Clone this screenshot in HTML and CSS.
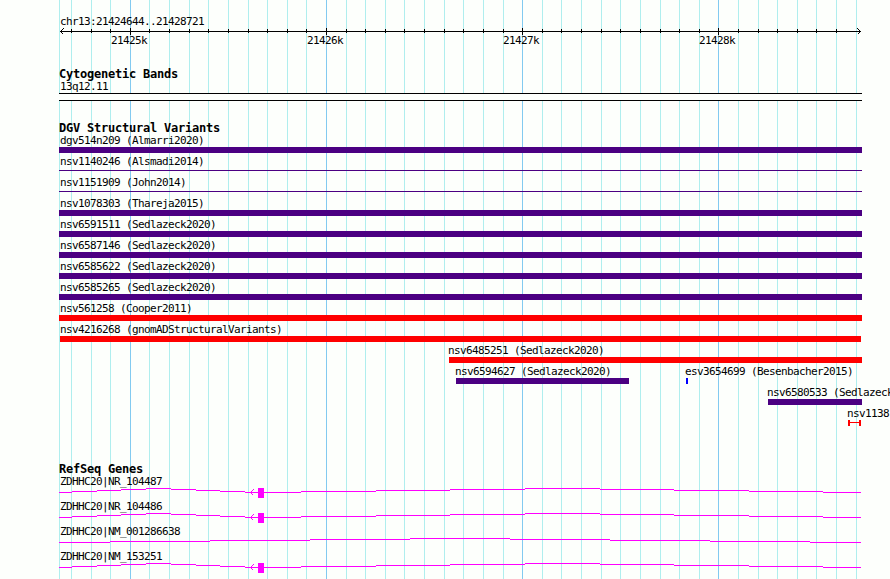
FILE: index.html
```
<!DOCTYPE html>
<html lang="en">
<head>
  <meta charset="UTF-8">
  <meta name="viewport" content="width=device-width, initial-scale=1.0">
  <title>chr13:21424644..21428721</title>
  <link rel="stylesheet" href="styles.css">
</head>
<body>
  <div class="browser">
    <svg class="grid" width="890" height="579" shape-rendering="crispEdges">
      <path class="minor" d="M59.5 0v579M71.5 0v579M91.5 0v579M110.5 0v579M149.5 0v579M169.5 0v579M189.5 0v579M208.5 0v579M228.5 0v579M248.5 0v579M267.5 0v579M287.5 0v579M306.5 0v579M346.5 0v579M365.5 0v579M385.5 0v579M404.5 0v579M424.5 0v579M444.5 0v579M463.5 0v579M483.5 0v579M503.5 0v579M542.5 0v579M561.5 0v579M581.5 0v579M601.5 0v579M620.5 0v579M640.5 0v579M660.5 0v579M679.5 0v579M699.5 0v579M738.5 0v579M758.5 0v579M777.5 0v579M797.5 0v579M816.5 0v579M836.5 0v579M856.5 0v579"/>
      <path class="major" d="M130.5 0v579M326.5 0v579M522.5 0v579M718.5 0v579"/>
    </svg>

    <div class="tracks">
      <section class="ruler">
        <div class="label">chr13:21424644..21428721</div>
        <svg class="axis" width="803" height="7" shape-rendering="crispEdges">
          <path d="M1 3.5h801"/>
          <path d="M12.5 1v4M32.5 1v4M51.5 1v4M90.5 1v4M110.5 1v4M130.5 1v4M149.5 1v4M169.5 1v4M189.5 1v4M208.5 1v4M228.5 1v4M247.5 1v4M287.5 1v4M306.5 1v4M326.5 1v4M345.5 1v4M365.5 1v4M385.5 1v4M404.5 1v4M424.5 1v4M444.5 1v4M483.5 1v4M502.5 1v4M522.5 1v4M542.5 1v4M561.5 1v4M581.5 1v4M601.5 1v4M620.5 1v4M640.5 1v4M679.5 1v4M699.5 1v4M718.5 1v4M738.5 1v4M757.5 1v4M777.5 1v4"/>
          <path d="M71.5 0v7M267.5 0v7M463.5 0v7M659.5 0v7"/>
          <path d="M4.5 .5l-3 3l3 3M798.5 .5l3 3l-3 3"/>
        </svg>
        <div class="scale">
          <span>21425k</span><span>21426k</span><span>21427k</span><span>21428k</span>
        </div>
      </section>

      <section class="cytobands">
        <h2>Cytogenetic Bands</h2>
        <div class="label">13q12.11</div>
        <div class="band"></div>
      </section>

      <section class="variants">
        <h2>DGV Structural Variants</h2>
        <div class="row"><div class="feature full"><div class="label">dgv514n209 (Almarri2020)</div><div class="bar"></div></div></div>
        <div class="row"><div class="feature full"><div class="label">nsv1140246 (Alsmadi2014)</div><div class="bar thin"></div></div></div>
        <div class="row"><div class="feature full"><div class="label">nsv1151909 (John2014)</div><div class="bar thin"></div></div></div>
        <div class="row"><div class="feature full"><div class="label">nsv1078303 (Thareja2015)</div><div class="bar"></div></div></div>
        <div class="row"><div class="feature full"><div class="label">nsv6591511 (Sedlazeck2020)</div><div class="bar"></div></div></div>
        <div class="row"><div class="feature full"><div class="label">nsv6587146 (Sedlazeck2020)</div><div class="bar"></div></div></div>
        <div class="row"><div class="feature full"><div class="label">nsv6585622 (Sedlazeck2020)</div><div class="bar"></div></div></div>
        <div class="row"><div class="feature full"><div class="label">nsv6585265 (Sedlazeck2020)</div><div class="bar"></div></div></div>
        <div class="row"><div class="feature full"><div class="label">nsv561258 (Cooper2011)</div><div class="bar loss"></div></div></div>
        <div class="row"><div class="feature full"><div class="label">nsv4216268 (gnomADStructuralVariants)</div><div class="bar loss inset"></div></div></div>
        <div class="row"><div class="feature" style="margin-left: 390px; width: 413px"><div class="label">nsv6485251 (Sedlazeck2020)</div><div class="bar loss"></div></div></div>
        <div class="row">
          <div class="feature" style="margin-left: 397px; width: 173px"><div class="label">nsv6594627 (Sedlazeck2020)</div><div class="bar"></div></div>
          <div class="feature" style="margin-left: 57px; width: 2px"><div class="label">esv3654699 (Besenbacher2015)</div><div class="bar gain"></div></div>
        </div>
        <div class="row"><div class="feature" style="margin-left: 709px; width: 94px"><div class="label">nsv6580533 (Sedlazeck</div><div class="bar"></div></div></div>
        <div class="row"><div class="feature" style="margin-left: 789px; width: 13px"><div class="label">nsv1138</div><div class="bar span"></div></div></div>
      </section>

      <section class="genes">
        <h2>RefSeq Genes</h2>
        <div class="gene">
          <div class="label">ZDHHC20|NR_104487</div>
          <svg class="transcript" width="803" height="13" shape-rendering="crispEdges">
            <path d="M0 6.5h13m0-1h25m0-1h24m0-1h25m0-1h25m0 1h25m0 1h24m0 1h25m0 1h56m0-1h75m0-1h74m0-1h75m0-1h75m0 1h74m0 1h75m0 1h74m0 1h38"/>
            <path d="M194.5 3.5l-3 3l3 3"/>
            <rect x="199" y="2" width="6" height="10"/>
          </svg>
        </div>
        <div class="gene">
          <div class="label">ZDHHC20|NR_104486</div>
          <svg class="transcript" width="803" height="13" shape-rendering="crispEdges">
            <path d="M0 6.5h13m0-1h25m0-1h24m0-1h25m0-1h25m0 1h25m0 1h24m0 1h25m0 1h56m0-1h75m0-1h74m0-1h75m0-1h75m0 1h74m0 1h75m0 1h74m0 1h38"/>
            <path d="M194.5 3.5l-3 3l3 3"/>
            <rect x="199" y="2" width="6" height="10"/>
          </svg>
        </div>
        <div class="gene">
          <div class="label">ZDHHC20|NM_001286638</div>
          <svg class="transcript" width="803" height="13" shape-rendering="crispEdges">
            <path d="M0 6.5h51m0-1h100m0-1h100m0-1h100m0-1h100m0 1h100m0 1h100m0 1h100m0 1h51"/>
          </svg>
        </div>
        <div class="gene">
          <div class="label">ZDHHC20|NM_153251</div>
          <svg class="transcript" width="803" height="13" shape-rendering="crispEdges">
            <path d="M0 6.5h13m0-1h25m0-1h24m0-1h25m0-1h25m0 1h25m0 1h24m0 1h25m0 1h56m0-1h75m0-1h74m0-1h75m0-1h75m0 1h74m0 1h75m0 1h74m0 1h38"/>
            <path d="M194.5 3.5l-3 3l3 3"/>
            <rect x="199" y="2" width="6" height="10"/>
          </svg>
        </div>
      </section>
    </div>
  </div>
</body>
</html>
```

FILE: styles.css
```
body { margin: 0; background-color: #fdfffc; color: #000; font: 11px/12px "DejaVu Sans Mono", monospace; letter-spacing: -0.62px; }
.browser { position: relative; width: 890px; height: 579px; overflow: hidden; }
.grid { position: absolute; top: 0; left: 0; }
.grid path { fill: none; stroke-width: 1; }
.grid .minor { stroke: #afeeee; }
.grid .major { stroke: #82caf0; }
.tracks { position: relative; width: 803px; padding: 16px 0 0 59px; }
svg { display: block; }
h2 { height: 12px; margin: 0; font-size: 12px; line-height: 10px; font-weight: bold; letter-spacing: -0.225px; white-space: nowrap; }
.label { height: 12px; margin-left: 1px; white-space: nowrap; }

.ruler { height: 53px; }
.axis path { fill: none; stroke: #000; stroke-width: 1; }
.scale { display: flex; gap: 160px; padding-left: 52px; }
.scale span { width: 36px; }

.cytobands { height: 54px; }
.band { height: 6px; border-top: 1px solid #000; border-bottom: 1px solid #000; background-color: #fdfffc; }

.variants { height: 341px; }
.row { display: flex; height: 21px; }
.feature { flex: none; }
.feature .label { width: 0; margin-left: -1px; }
.feature.full .label { margin-left: 1px; }
.full { width: 803px; }
.bar { height: 6px; background-color: #4b0082; }
.thin { height: 1px; margin-top: 2px; }
.loss { background-color: #ff0000; }
.gain { background-color: #0000ff; }
.inset { margin: 0 1px; }
.span { box-sizing: border-box; border: solid #ff0000; border-width: 0 2px; background: linear-gradient(#ff0000, #ff0000) 0 2px / 100% 1px no-repeat; }

.gene { height: 25px; }
.transcript { margin-top: -2px; }
.transcript path { fill: none; stroke: #ff00ff; stroke-width: 1; }
.transcript rect { fill: #ff00ff; }
```
